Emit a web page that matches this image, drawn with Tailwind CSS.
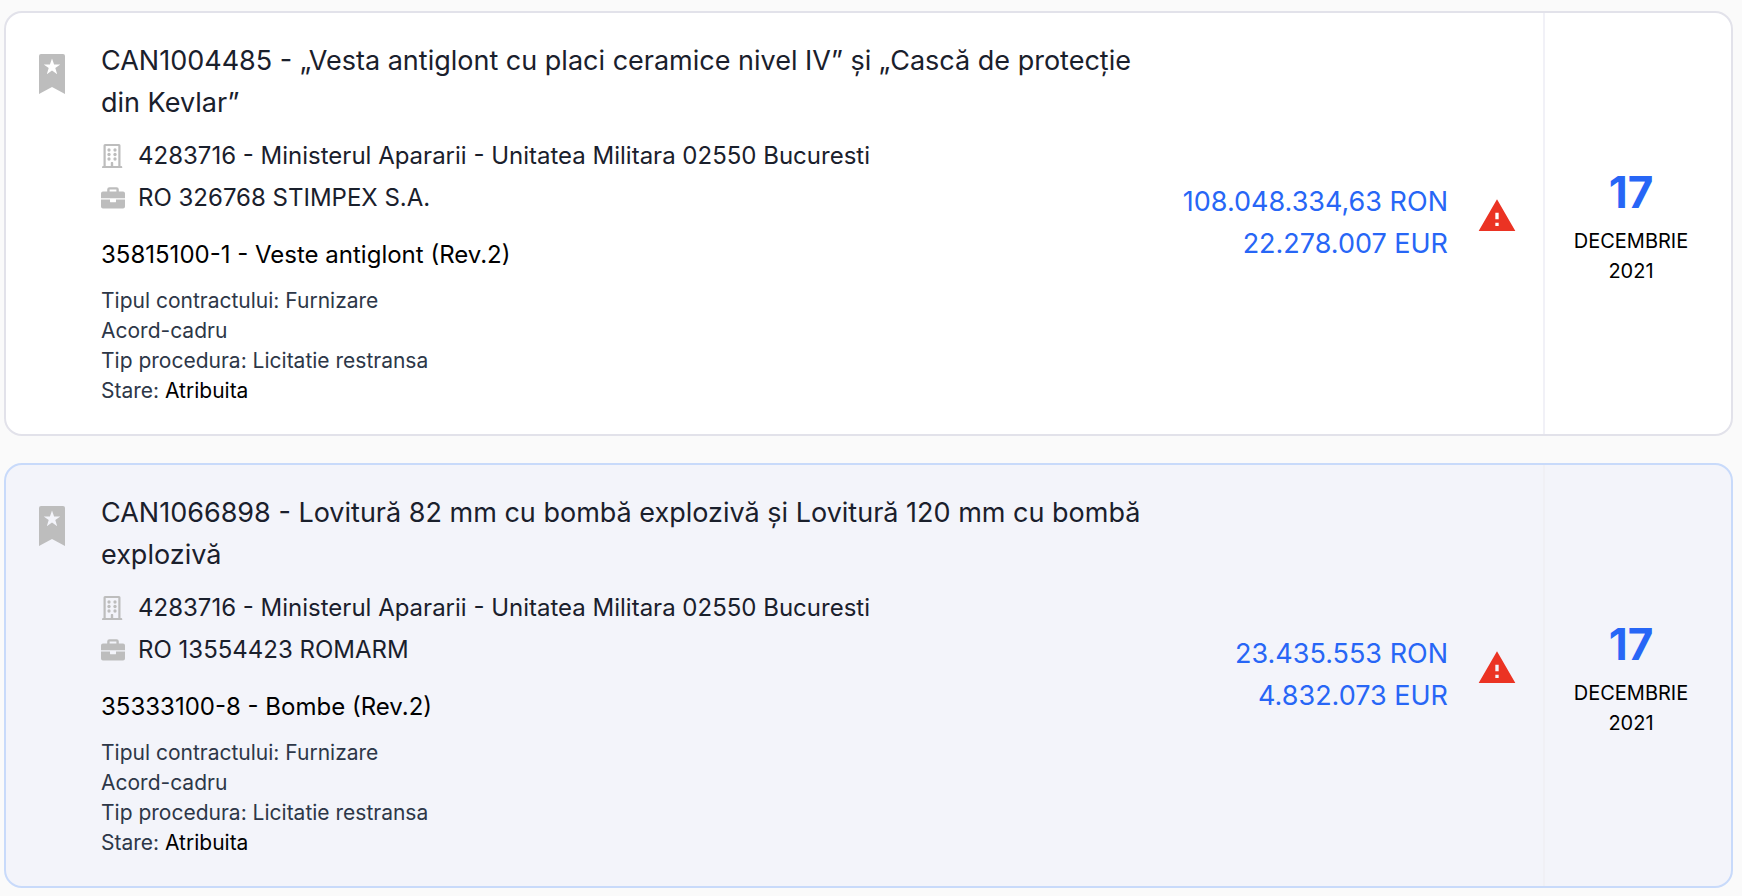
<!DOCTYPE html>
<html lang="ro">
<head>
  <meta charset="UTF-8" />
  <meta name="viewport" content="width=device-width, initial-scale=1.0"/>
  <title>Achizitii</title>
  <script src="https://cdn.jsdelivr.net/npm/@tailwindcss/browser@4"></script>
</head>
<body class="bg-[#fafafa] text-black font-[Inter,sans-serif]">

  <!-- Iconite folosite in fiecare card -->
  <svg class="hidden" aria-hidden="true">
    <symbol id="semn" viewBox="0 0 26 40">
      <path fill-rule="evenodd" d="M2 0H24Q26 0 26 2V40L13 33L0 40V2Q0 0 2 0ZM13 4.500L10.900 10.400H4.700L9.700 14.100L7.800 20.300L13 16.600L18.200 20.300L16.300 14.100L21.300 10.400H15.100Z"/>
    </symbol>
    <symbol id="cladire" viewBox="0 0 24 24">
      <path fill-rule="evenodd" d="M4 0H18Q19.500 0 19.500 1.500V22H20.500Q21.300 22 21.300 24H1Q1 22 1.800 22H2.500V1.500Q2.500 0 4 0ZM4.700 2V22H9.800V19Q9.800 18 10.400 18H11.600Q12.200 18 12.200 19V22H17.300V2Z"/>
      <circle cx="8" cy="6" r="1.650"/><circle cx="14" cy="6" r="1.650"/>
      <circle cx="8" cy="10.500" r="1.650"/><circle cx="14" cy="10.500" r="1.650"/>
      <circle cx="8" cy="15" r="1.650"/><circle cx="14" cy="15" r="1.650"/>
    </symbol>
    <symbol id="servieta" viewBox="0 0 24 24">
      <path fill-rule="evenodd" d="M6.200 5.600V3.500Q6.200 1.200 8.500 1.200H15.500Q17.800 1.200 17.800 3.500V5.600H22Q24 5.600 24 7.600V12.200H0V7.600Q0 5.600 2 5.600ZM8.600 3.500V5.600H15.400V3.500Z"/>
      <path d="M0 13.400H9V15.400Q9 16.300 9.900 16.300H14.100Q15 16.300 15 15.400V13.400H24V20.400Q24 22.400 22 22.400H2Q0 22.400 0 20.400Z"/>
    </symbol>
    <symbol id="atentie" viewBox="0 0 24 24">
      <path d="M1 21h22L12 2 1 21zm12-3h-2v-2h2v2zm0-4h-2v-4h2v4z"/>
    </symbol>
  </svg>

  <main class="pl-1 pr-[9px] py-[11px] space-y-[27px]">

    <article class="flex rounded-[18px] border-2 border-[#e2e2ea] bg-white">
      <div class="flex flex-1 min-w-0 items-center pl-[33px] pr-[26px]">
        <div class="flex flex-1 min-w-0 gap-9 pt-[27px] pb-7">
          <button type="button" aria-label="Salveaza" class="self-start mt-[14px] text-[#bdbdbd]">
            <svg class="w-[26px] h-10" fill="currentColor"><use href="#semn"/></svg>
          </button>
          <div class="flex-1 min-w-0">
            <h2 class="text-[27px] leading-[42px] text-[#1a202c]"><a href="#">CAN1004485 - „Vesta antiglont cu placi ceramice nivel IV” și „Cască de protecție din Kevlar”</a></h2>
            <div class="mt-[14px] space-y-[6px] text-2xl leading-9 text-[#1a202c]">
              <p class="flex items-center gap-[13px]"><svg class="size-6 shrink-0 text-[#bdbdbd]" fill="currentColor"><use href="#cladire"/></svg>4283716 - Ministerul Apararii - Unitatea Militara 02550 Bucuresti</p>
              <p class="flex items-center gap-[13px]"><svg class="size-6 shrink-0 text-[#bdbdbd]" fill="currentColor"><use href="#servieta"/></svg>RO 326768 STIMPEX S.A.</p>
            </div>
            <p class="mt-[21px] text-2xl leading-9">35815100-1 - Veste antiglont (Rev.2)</p>
            <div class="mt-[13px] text-[21px] leading-[30px] text-[#2d3748]">
              <p>Tipul contractului: Furnizare</p>
              <p>Acord-cadru</p>
              <p>Tip procedura: Licitatie restransa</p>
              <p>Stare: <span class="text-black">Atribuita</span></p>
            </div>
          </div>
        </div>
        <div class="w-[300px] shrink-0 mb-[2px] text-right text-[27px] leading-[42px] text-[#2766f6]">
          <p>108.048.334,63 RON</p>
          <p>22.278.007 EUR</p>
        </div>
        <svg class="size-10 shrink-0 ml-[29px] mb-4 text-[#eb3323]" fill="currentColor"><use href="#atentie"/></svg>
      </div>
      <div class="flex w-[188px] shrink-0 flex-col items-center justify-center border-l-2 border-[#f1f1f7] pl-7 pr-[42px] text-xl leading-[30px]">
        <p class="mb-[2px] text-[44px] leading-[63px] font-bold text-[#2766f6]">17</p>
        <p>DECEMBRIE</p>
        <p>2021</p>
      </div>
    </article>

    <article class="flex rounded-[18px] border-2 border-[#c8dafa] bg-[#f3f4fa]">
      <div class="flex flex-1 min-w-0 items-center pl-[33px] pr-[26px]">
        <div class="flex flex-1 min-w-0 gap-9 pt-[27px] pb-7">
          <button type="button" aria-label="Salveaza" class="self-start mt-[14px] text-[#bdbdbd]">
            <svg class="w-[26px] h-10" fill="currentColor"><use href="#semn"/></svg>
          </button>
          <div class="flex-1 min-w-0">
            <h2 class="text-[27px] leading-[42px] text-[#1a202c]"><a href="#">CAN1066898 - Lovitură 82 mm cu bombă explozivă și Lovitură 120 mm cu bombă explozivă</a></h2>
            <div class="mt-[14px] space-y-[6px] text-2xl leading-9 text-[#1a202c]">
              <p class="flex items-center gap-[13px]"><svg class="size-6 shrink-0 text-[#bdbdbd]" fill="currentColor"><use href="#cladire"/></svg>4283716 - Ministerul Apararii - Unitatea Militara 02550 Bucuresti</p>
              <p class="flex items-center gap-[13px]"><svg class="size-6 shrink-0 text-[#bdbdbd]" fill="currentColor"><use href="#servieta"/></svg>RO 13554423 ROMARM</p>
            </div>
            <p class="mt-[21px] text-2xl leading-9">35333100-8 - Bombe (Rev.2)</p>
            <div class="mt-[13px] text-[21px] leading-[30px] text-[#2d3748]">
              <p>Tipul contractului: Furnizare</p>
              <p>Acord-cadru</p>
              <p>Tip procedura: Licitatie restransa</p>
              <p>Stare: <span class="text-black">Atribuita</span></p>
            </div>
          </div>
        </div>
        <div class="w-[300px] shrink-0 mb-[2px] text-right text-[27px] leading-[42px] text-[#2766f6]">
          <p>23.435.553 RON</p>
          <p>4.832.073 EUR</p>
        </div>
        <svg class="size-10 shrink-0 ml-[29px] mb-4 text-[#eb3323]" fill="currentColor"><use href="#atentie"/></svg>
      </div>
      <div class="flex w-[188px] shrink-0 flex-col items-center justify-center border-l-2 border-[#f0f0f5] pl-7 pr-[42px] text-xl leading-[30px]">
        <p class="mb-[2px] text-[44px] leading-[63px] font-bold text-[#2766f6]">17</p>
        <p>DECEMBRIE</p>
        <p>2021</p>
      </div>
    </article>

  </main>

</body>
</html>
